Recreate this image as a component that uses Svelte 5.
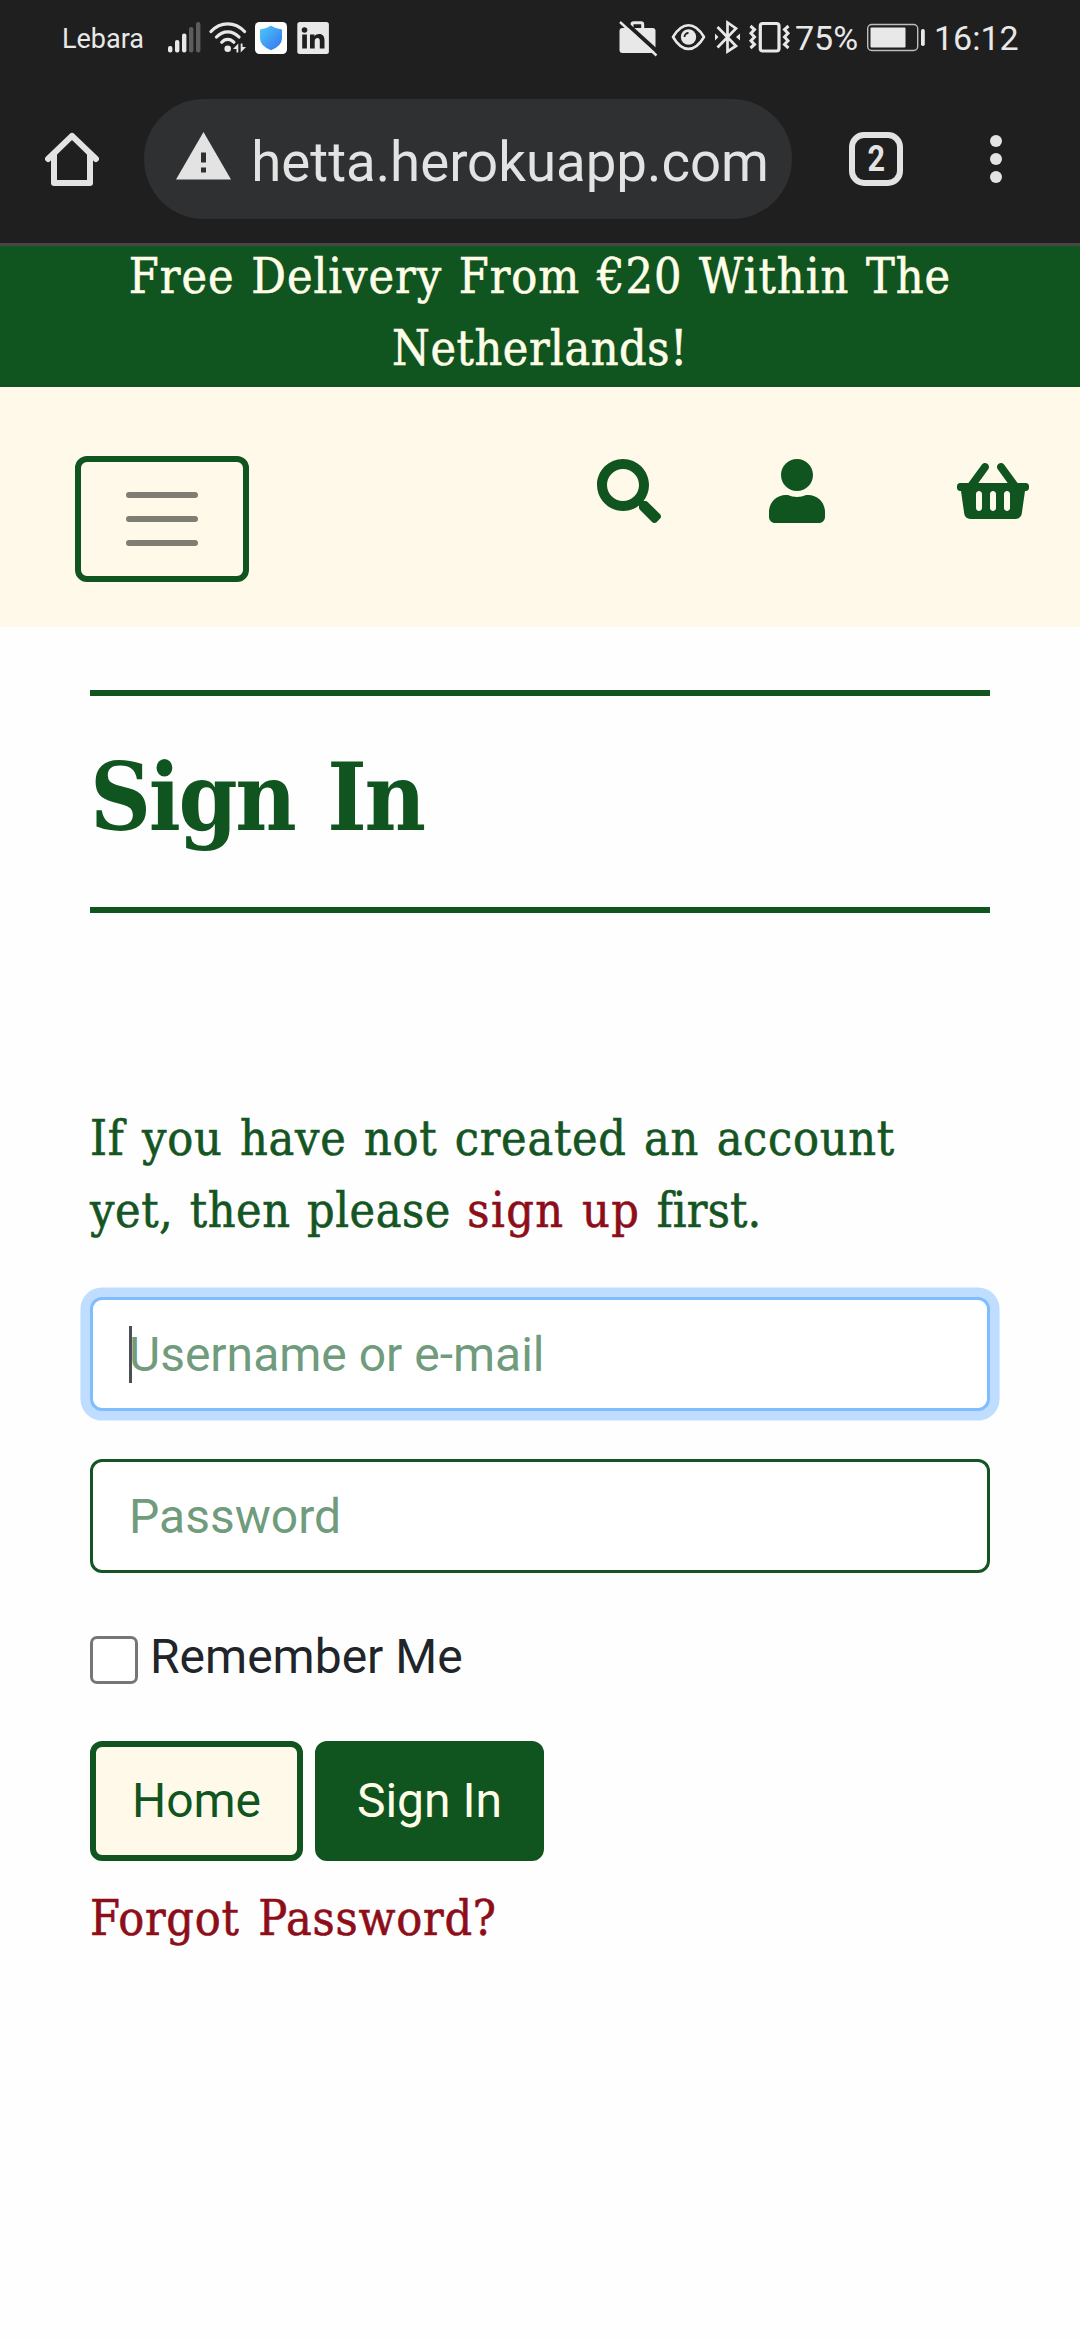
<script>
  const signalBars = [
    { x: 168, y: 46, on: true },
    { x: 175, y: 40, on: true },
    { x: 182, y: 33.5, on: true },
    { x: 189, y: 27, on: false },
    { x: 196, y: 22, on: false }
  ];
</script>

<div class="screen">
  <header class="chrome">
    <div class="status">
      <span class="carrier">Lebara</span>
      <svg class="signal" viewBox="168 0 33 75" width="33" height="75">
        {#each signalBars as bar}
          <rect x={bar.x} y={bar.y} width="4.4" height={52.5 - bar.y} rx="2" fill={bar.on ? '#e8e8e8' : '#5c5c5c'} />
        {/each}
      </svg>
      <svg class="wifi" viewBox="209 0 38 75" width="38" height="75" fill="none" stroke="#e8e8e8" stroke-width="3.2" stroke-linecap="round">
        <path d="M211 31.5Q218 23.8 227.7 23.8T244.500 31.5M216.500 37Q221.300 31.800 227.700 31.800T239 37M221.800 42.200Q224.300 39.300 227.700 39.300T233.800 42.200" />
        <circle cx="227.700" cy="48.700" r="3.300" fill="#e8e8e8" stroke="none" />
        <path d="M233 49L238.300 43.500V52.500H236.500V49ZM246 47L240.700 52.500V43.500H242.500V47Z" fill="#e8e8e8" stroke="none" />
      </svg>
      <svg class="shield" viewBox="255 0 32 75" width="32" height="75">
        <defs>
          <linearGradient id="shieldFill" x1="0" y1="0" x2="1" y2="1">
            <stop offset="0" stop-color="#4cc9fa" />
            <stop offset="1" stop-color="#3674ee" />
          </linearGradient>
        </defs>
        <rect x="255" y="22" width="32" height="32" rx="4.500" fill="#fff" />
        <path d="M271 25.800Q276 29 282 29.500V38Q282 46 271 50.200Q260 46 260 38V29.500Q266 29 271 25.800Z" fill="url(#shieldFill)" />
      </svg>
      <svg class="linkedin" viewBox="297 0 32 75" width="32" height="75">
        <rect x="297.300" y="22" width="31.600" height="32" rx="2.500" fill="#e8e8e8" />
        <g fill="#1f1f1f">
          <circle cx="304.500" cy="30" r="2.800" />
          <rect x="302.200" y="34.500" width="4.700" height="14" />
          <path d="M310 34.500h4.500v2c1-1.600 2.600-2.400 4.600-2.400 3.700 0 5.400 2.400 5.400 6.300v8.100h-4.700v-7.400c0-2-.7-3.100-2.300-3.100-1.900 0-2.800 1.300-2.800 3.300v7.200H310z" />
        </g>
      </svg>

      <svg class="briefcase" viewBox="618 0 40 75" width="40" height="75">
        <path d="M632 29V24.500Q632 22.800 633.700 22.800H641Q642.700 22.800 642.700 24.500V29" fill="none" stroke="#e8e8e8" stroke-width="3" />
        <rect x="619.500" y="28" width="36" height="25" rx="3" fill="#e8e8e8" />
        <path d="M622.500 20L660 54" stroke="#1f1f1f" stroke-width="4" />
        <path d="M620 22L656.500 55.500" stroke="#e8e8e8" stroke-width="2.400" />
      </svg>
      <svg class="eye" viewBox="671 0 35 75" width="35" height="75">
        <path d="M673 37Q680 25.300 688.500 25.300T704 37Q697 48.900 688.500 48.900T673 37Z" fill="none" stroke="#e8e8e8" stroke-width="2.600" stroke-linejoin="round" />
        <circle cx="688.500" cy="37" r="7.700" fill="#e8e8e8" />
        <path d="M684.500 37A4 4 0 0 1 688.500 33" fill="none" stroke="#1f1f1f" stroke-width="1.800" />
      </svg>
      <svg class="bluetooth" viewBox="714 0 27 75" width="27" height="75">
        <path d="M717.500 27L736 46L727.500 51.500V22.500L736 28.500L717.500 47.500" fill="none" stroke="#e8e8e8" stroke-width="2.700" />
        <path d="M715 33.500L718.500 37L715 40.500ZM740 33.500L736 37L740 40.500Z" fill="#e8e8e8" />
      </svg>
      <svg class="vibrate" viewBox="748 0 43 75" width="43" height="75" fill="none" stroke="#e8e8e8">
        <rect x="760.300" y="23.500" width="18.700" height="27.500" rx="2.500" stroke-width="3.200" />
        <path d="M750.500 26L754.500 29.500L751 33.300L754.500 37L751 40.700L754.500 44.500L750.500 48M788.500 26L784.500 29.500L788 33.300L784.500 37L788 40.700L784.500 44.500L788.500 48" stroke-width="3" />
      </svg>
      <span class="percent">75%</span>
      <svg class="battery" viewBox="866 0 60 75" width="60" height="75">
        <rect x="867.700" y="24.500" width="50" height="26" rx="4" fill="none" stroke="#bdbdbd" stroke-width="1.400" />
        <rect x="870.500" y="27.500" width="35" height="20" rx="1" fill="#e8e8e8" />
        <rect x="921" y="29" width="3.800" height="17" rx="1.800" fill="#e8e8e8" />
      </svg>
      <span class="clock">16:12</span>
    </div>

    <div class="toolbar">
      <svg class="home-icon" viewBox="0 0 54 54" width="54" height="54" fill="none" stroke="#e3e3e3" stroke-width="6">
        <path d="M3 27L27 3.800L51 27" stroke-linecap="round" stroke-linejoin="round" />
        <path d="M9 22V51H45V22" stroke-linejoin="round" />
      </svg>
      <div class="address">
        <svg class="warning" viewBox="0 0 55 48" width="55" height="48">
          <path d="M27.500 0L55 47.500H0Z" fill="#e3e3e3" />
          <path d="M25 20.500h5v10h-5zM25 35.500h5v5h-5z" fill="#2f3032" />
        </svg>
        <div class="url"><span>hetta.herokuapp.com</span></div>
      </div>
      <div class="tabs"><span>2</span></div>
      <svg class="dots" viewBox="0 0 12 48" width="12" height="48" fill="#e3e3e3">
        <circle cx="6" cy="6" r="6" />
        <circle cx="6" cy="24" r="6" />
        <circle cx="6" cy="42" r="6" />
      </svg>
    </div>
  </header>

  <div class="banner">
    <div class="line first">Free Delivery From €20 Within The</div>
    <div class="line second">Netherlands!</div>
  </div>

  <nav>
    <button class="burger" aria-label="Menu">
      <svg viewBox="0 0 72 54" width="72" height="54" stroke="#807d75" stroke-width="6" stroke-linecap="round">
        <path d="M3 3H69M3 27H69M3 51H69" />
      </svg>
    </button>
    <svg class="search" viewBox="0 0 512 512" width="64" height="64">
      <path d="M505 442.700L405.300 343c-4.500-4.500-10.600-7-17-7H372c27.600-35.300 44-79.700 44-128C416 93.100 322.900 0 208 0S0 93.100 0 208s93.100 208 208 208c48.300 0 92.700-16.400 128-44v16.300c0 6.400 2.500 12.500 7 17l99.700 99.700c9.400 9.400 24.600 9.400 33.900 0l28.300-28.300c9.400-9.400 9.400-24.600.1-34zM208 336c-70.700 0-128-57.200-128-128 0-70.700 57.200-128 128-128 70.700 0 128 57.200 128 128 0 70.700-57.200 128-128 128z" />
    </svg>
    <svg class="user" viewBox="0 0 448 512" width="56" height="64">
      <path d="M224 256c70.700 0 128-57.300 128-128S294.700 0 224 0 96 57.300 96 128s57.300 128 128 128zm89.600 32h-16.700c-22.200 10.200-46.900 16-72.900 16s-50.600-5.800-72.900-16h-16.700C60.200 288 0 348.200 0 422.400V464c0 26.500 21.500 48 48 48h352c26.500 0 48-21.500 48-48v-41.600c0-74.200-60.200-134.400-134.400-134.400z" />
    </svg>
    <svg class="basket" viewBox="0 0 576 512" width="72" height="64">
      <path d="M576 216v16c0 13.255-10.745 24-24 24h-8l-26.113 182.788C514.509 462.435 494.257 480 470.370 480H105.630c-23.887 0-44.139-17.565-47.518-41.212L32 256h-8c-13.255 0-24-10.745-24-24v-16c0-13.255 10.745-24 24-24h67.341l106.780-146.821c10.395-14.292 30.407-17.453 44.701-7.058 14.293 10.395 17.453 30.408 7.058 44.701L170.477 192h235.046L326.120 82.821c-10.395-14.292-7.234-34.306 7.059-44.701 14.291-10.395 34.306-7.235 44.701 7.058L484.659 192H552c13.255 0 24 10.745 24 24zM312 392V280c0-13.255-10.745-24-24-24s-24 10.745-24 24v112c0 13.255 10.745 24 24 24s24-10.745 24-24zm112 0V280c0-13.255-10.745-24-24-24s-24 10.745-24 24v112c0 13.255 10.745 24 24 24s24-10.745 24-24zm-224 0V280c0-13.255-10.745-24-24-24s-24 10.745-24 24v112c0 13.255 10.745 24 24 24s24-10.745 24-24z" />
    </svg>
  </nav>

  <main>
    <h1>Sign In</h1>
    <div class="intro">
      <div class="line intro-a">If you have not created an account</div>
      <div class="line intro-b">yet, then please <a class="signup" href="#signup">sign up</a> <span class="tail">first.</span></div>
    </div>
    <form onsubmit={(e) => e.preventDefault()}>
      <div class="field focused">
        <input type="text" placeholder="Username or e-mail" />
        <span class="caret"></span>
      </div>
      <div class="field">
        <input type="password" placeholder="Password" />
      </div>
      <label class="remember">
        <input type="checkbox" />
        <span>Remember Me</span>
      </label>
      <div class="actions">
        <button type="button" class="btn light">Home</button>
        <button type="submit" class="btn dark">Sign In</button>
      </div>
      <a class="line forgot" href="#forgot">Forgot Password?</a>
    </form>
  </main>
</div>

<style>
  :global(body) {
    background: #fff;
  }
  .screen {
    width: 1080px;
    height: 2340px;
    overflow: hidden;
    background: #fefefe;
    font-family: Roboto, 'Liberation Sans', sans-serif;
    box-sizing: border-box;
  }
  .screen * {
    box-sizing: border-box;
  }
  svg {
    display: block;
    flex: none;
  }
  a {
    color: #8d0e19;
    text-decoration: none;
  }
  .chrome {
    height: 246px;
    background: #1f1f1f;
    border-bottom: 3px solid #464646;
    color: #e8e8e8;
  }
  .status {
    display: flex;
    align-items: center;
    height: 75px;
    padding-left: 62px;
    white-space: nowrap;
  }
  .carrier {
    width: 106px;
    font-size: 27px;
    padding-top: 3px;
  }
  .wifi { margin-left: 8px; }
  .shield { margin-left: 8px; }
  .linkedin { margin-left: 10px; }
  .briefcase { margin-left: 289px; }
  .eye { margin-left: 13px; }
  .bluetooth { margin-left: 8px; }
  .vibrate { margin-left: 7px; }
  .percent {
    width: 71px;
    margin-left: 4px;
    font-size: 34px;
    padding-top: 1px;
  }
  .clock {
    margin-left: 8px;
    font-size: 34px;
    padding-top: 1px;
  }
  .toolbar {
    display: flex;
    align-items: center;
    height: 168px;
    padding-left: 45px;
  }
  .address {
    display: flex;
    align-items: center;
    width: 648px;
    height: 120px;
    margin-left: 45px;
    padding-left: 32px;
    border-radius: 60px;
    background: #2f3032;
  }
  .warning {
    margin-bottom: 7px;
  }
  .url {
    display: flex;
    justify-content: flex-end;
    width: 517px;
    margin-left: 21px;
    padding-top: 6px;
    font-size: 54.6px;
    color: #e3e3e3;
  }
  .tabs {
    display: flex;
    align-items: center;
    justify-content: center;
    width: 54px;
    height: 54px;
    margin-left: 57px;
    border: 6px solid #e3e3e3;
    border-radius: 15px;
    color: #e3e3e3;
    font-size: 36px;
    font-weight: 700;
    line-height: 42px;
  }
  .tabs span {
    transform: scaleX(0.85);
  }
  .dots {
    margin-left: 87px;
  }
  .line {
    display: block;
    font-family: 'Roboto Slab', 'DejaVu Serif Condensed', 'DejaVu Serif', serif;
    font-size: 48px;
    line-height: 72px;
    white-space: nowrap;
    -webkit-text-stroke: 0.6px currentColor;
  }
  .banner {
    display: flow-root;
    height: 141px;
    background: #10551f;
    color: #fffde8;
    text-align: center;
  }
  .first {
    margin-top: -6px;
    letter-spacing: 1px;
    word-spacing: 2px;
  }
  .second {
    letter-spacing: 0.55px;
  }
  nav {
    display: flex;
    align-items: flex-start;
    height: 240px;
    padding: 69px 0 0 75px;
    background: #fff9e9;
    fill: #10551f;
  }
  .burger {
    display: flex;
    align-items: center;
    justify-content: center;
    width: 174px;
    height: 126px;
    padding: 0;
    border: 6px solid #10551f;
    border-radius: 12px;
    background: none;
  }
  .search { margin: 3px 0 0 348px; }
  .user { margin: 3px 0 0 108px; }
  .basket { margin: 3px 0 0 132px; }
  main {
    padding: 63px 90px 0;
  }
  h1 {
    margin: 0;
    height: 223px;
    padding-top: 51px;
    border-top: 6px solid #10551f;
    border-bottom: 6px solid #10551f;
    color: #10551f;
    font-family: 'Roboto Slab', 'DejaVu Serif Condensed', 'DejaVu Serif', serif;
    font-size: 94px;
    font-weight: 700;
    line-height: 100px;
    letter-spacing: -2.4px;
    word-spacing: 6px;
  }
  .intro {
    margin-top: 189px;
    color: #145523;
  }
  .intro-a {
    letter-spacing: 0.75px;
    word-spacing: 3px;
  }
  .intro-b {
    letter-spacing: 0.6px;
    word-spacing: 2px;
  }
  .signup {
    letter-spacing: 1.5px;
  }
  .tail {
    letter-spacing: 0.2px;
  }
  form {
    padding-top: 51px;
  }
  .field {
    position: relative;
    height: 114px;
    margin-bottom: 48px;
  }
  .field input {
    display: block;
    width: 900px;
    height: 114px;
    padding: 0 36px;
    border: 3px solid #145523;
    border-radius: 12px;
    background: #fff;
    font-family: inherit;
    font-size: 48px;
    outline: none;
  }
  .field input::placeholder {
    color: #709b7c;
    opacity: 1;
  }
  .focused input {
    border-color: #80bdff;
    box-shadow: 0 0 0 9.6px #bfdeff;
  }
  .caret {
    position: absolute;
    left: 39px;
    top: 29px;
    width: 3px;
    height: 57px;
    background: #495057;
  }
  .remember {
    display: flex;
    height: 72px;
    color: #212529;
    font-size: 48px;
    line-height: 72px;
  }
  .remember input {
    appearance: none;
    width: 48px;
    height: 48px;
    margin: 15px 12px 0 0;
    border: 3px solid #767676;
    border-radius: 7px;
    background: #fff;
  }
  .actions {
    display: flex;
    gap: 12px;
    margin-top: 48px;
  }
  .btn {
    height: 120px;
    padding: 0 0 1px;
    border: 6px solid #10551f;
    border-radius: 12px;
    font-family: inherit;
    font-size: 48px;
  }
  .light {
    width: 213px;
    background: #fff9e9;
    color: #10551f;
  }
  .dark {
    width: 229px;
    background: #10551f;
    color: #fffde8;
  }
  .forgot {
    margin-top: 21px;
    letter-spacing: 0.8px;
    word-spacing: 4px;
  }
</style>
